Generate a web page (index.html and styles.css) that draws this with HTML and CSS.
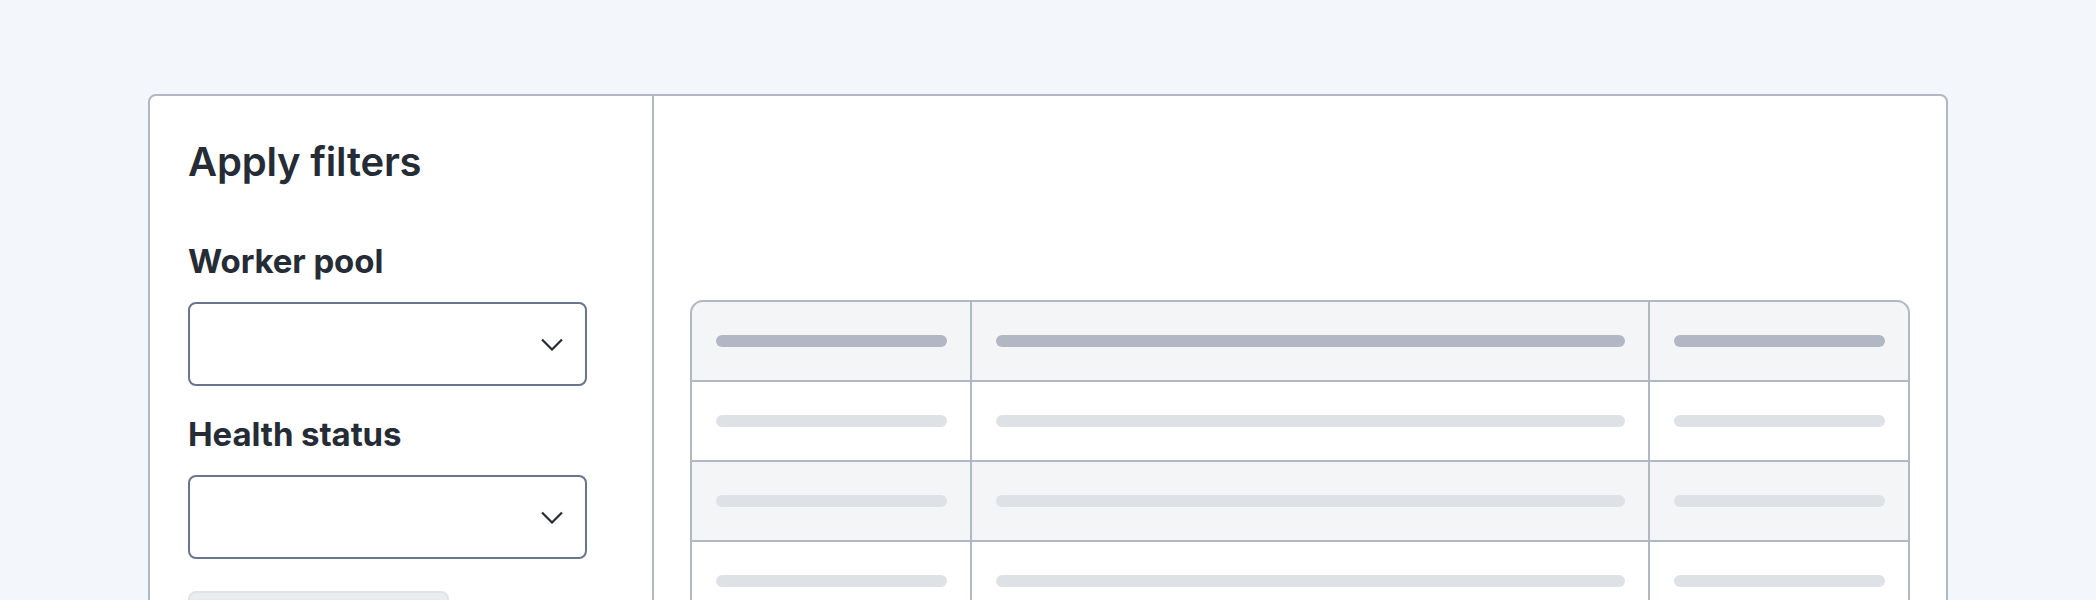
FILE: index.html
```html
<!DOCTYPE html>
<html lang="en">
<head>
<meta charset="utf-8">
<title>Apply filters</title>
<link rel="stylesheet" href="styles.css">
</head>
<body>
<div class="page">
  <div class="card">
    <aside class="sidebar">
      <h1 class="title">Apply filters</h1>
      <div class="field">
        <label class="label">Worker pool</label>
        <div class="select">
          <svg class="chevron" width="22" height="13" viewBox="0 0 22 13"><polyline points="1,1.5 11,11.5 21,1.5" fill="none" stroke="#262c36" stroke-width="2.2"/></svg>
        </div>
      </div>
      <div class="field">
        <label class="label">Health status</label>
        <div class="select">
          <svg class="chevron" width="22" height="13" viewBox="0 0 22 13"><polyline points="1,1.5 11,11.5 21,1.5" fill="none" stroke="#262c36" stroke-width="2.2"/></svg>
        </div>
      </div>
      <div class="button"></div>
    </aside>
    <main class="content">
      <div class="table">
        <div class="cell head"><span class="bar bar-head"></span></div>
        <div class="cell head"><span class="bar bar-head"></span></div>
        <div class="cell head"><span class="bar bar-head"></span></div>

        <div class="cell"><span class="bar"></span></div>
        <div class="cell"><span class="bar"></span></div>
        <div class="cell"><span class="bar"></span></div>

        <div class="cell alt"><span class="bar"></span></div>
        <div class="cell alt"><span class="bar"></span></div>
        <div class="cell alt"><span class="bar"></span></div>

        <div class="cell"><span class="bar"></span></div>
        <div class="cell"><span class="bar"></span></div>
        <div class="cell"><span class="bar"></span></div>

        <div class="cell alt"><span class="bar"></span></div>
        <div class="cell alt"><span class="bar"></span></div>
        <div class="cell alt"><span class="bar"></span></div>
      </div>
    </main>
  </div>
</div>
</body>
</html>
```

FILE: styles.css
```css
* { box-sizing: border-box; }

html, body {
  margin: 0;
  padding: 0;
  background: #f3f7fb;
  font-family: Inter, "Noto Sans", "Liberation Sans", sans-serif;
  color: #262c36;
  overflow: hidden;
}

.page {
  padding: 94px 0 0 148px;
}

.card {
  width: 1800px;
  min-height: 700px;
  background: #ffffff;
  border: 2px solid #b1b7c3;
  border-radius: 8px;
  display: grid;
  grid-template-columns: 504px 1fr;
}

.sidebar {
  border-right: 2px solid #b1b7c3;
  padding: 42px 0 0 38px;
}

.title {
  margin: 0 0 55px 0;
  font-size: 40px;
  line-height: 48px;
  font-weight: 600;
  letter-spacing: -0.2px;
}

.field {
  display: flex;
  flex-direction: column;
  gap: 21px;
  margin-bottom: 28px;
}

.field + .field {
  margin-bottom: 32px;
}

.label {
  display: block;
  font-size: 33px;
  line-height: 40px;
  font-weight: 700;
  letter-spacing: -0.1px;
}

.select {
  width: 399px;
  height: 84px;
  border: 2px solid #68758c;
  border-radius: 8px;
  display: flex;
  align-items: center;
  justify-content: flex-end;
  padding-right: 22px;
}

.chevron {
  display: block;
}

.button {
  width: 261px;
  height: 60px;
  background: #ebecf0;
  border: 2px solid #e0e2e6;
  border-radius: 8px;
}

.content {
  padding: 204px 36px 0 36px;
}

.table {
  display: grid;
  grid-template-columns: 278px 676px 1fr;
  gap: 2px;
  background: #b1b7c3;
  border: 2px solid #b1b7c3;
  border-radius: 13px;
  overflow: hidden;
}

.cell {
  height: 78px;
  background: #ffffff;
  display: flex;
  align-items: center;
  padding: 0 23px 0 24px;
}

.cell.head,
.cell.alt {
  background: #f4f5f7;
}

.bar {
  display: block;
  width: 100%;
  height: 12px;
  border-radius: 6px;
  background: #dee1e6;
}

.bar-head {
  background: #b1b7c3;
}
```
